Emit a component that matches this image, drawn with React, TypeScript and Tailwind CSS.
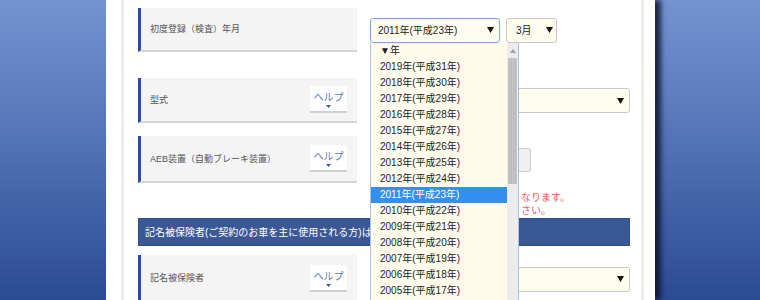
import React from 'react';

const font = "font-['Liberation_Sans','Noto_Sans_CJK_JP',sans-serif]";

const years = [
    '▼年',
    '2019年(平成31年)',
    '2018年(平成30年)',
    '2017年(平成29年)',
    '2016年(平成28年)',
    '2015年(平成27年)',
    '2014年(平成26年)',
    '2013年(平成25年)',
    '2012年(平成24年)',
    '2011年(平成23年)',
    '2010年(平成22年)',
    '2009年(平成21年)',
    '2008年(平成20年)',
    '2007年(平成19年)',
    '2006年(平成18年)',
    '2005年(平成17年)',
];

const Arrow = () => (
    <svg width="7" height="6" viewBox="0 0 7 6" className="shrink-0">
        <path d="M0 0 H7 L3.5 6 Z" fill="#111" />
    </svg>
);

const HelpButton = () => (
    <div className="w-[37px] h-[27px] bg-white border-b-2 border-[#cfcfcf] flex flex-col items-center pt-[6px]">
        <span className="text-[10px] leading-[12px] text-[#5a78b6]">ヘルプ</span>
        <svg width="5" height="3" viewBox="0 0 5 3" className="mt-[1px]">
            <path d="M0 0 H5 L2.5 3 Z" fill="#3a5a98" />
        </svg>
    </div>
);

const Label: React.FC<{ text: string; help?: boolean; h: string }> = ({ text, help, h }) => (
    <div className={`w-[219px] ${h} shrink-0 bg-[#f4f4f4] border-l-[3px] border-[#2c4d9c] border-b-2 border-b-[#d6d6d6] flex items-center justify-between pl-[9px] pr-[10px]`}>
        <span className="text-[9px] text-[#555] pt-[2px]">{text}</span>
        {help && <HelpButton />}
    </div>
);

const WideSelect = () => (
    <div className="w-[260px] h-[25px] bg-[#fffdee] border border-[#c8c8c8] rounded-[3px] flex items-center justify-end pr-[5px]">
        <Arrow />
    </div>
);

const App: React.FC = () => {
    return (
        <div className={`w-[760px] h-[300px] overflow-hidden flex bg-gradient-to-b from-[#7393d0] via-[#5171b5] to-[#2b4a94] ${font}`}>
            <div className="w-[106px] shrink-0" />

            {/* page */}
            <div className="w-[549px] shrink-0 bg-white pl-[15px] pr-[11px] shadow-[6px_0_5px_rgba(15,20,45,0.85)] relative">
                <div className="h-full border-x-[3px] border-[#ececec] pl-[14px] pr-[11px]">

                    {/* 初度登録 */}
                    <div className="flex gap-[13px] pt-[8px]">
                        <Label text="初度登録（検査）年月" h="h-[44px]" />
                        <div className="flex items-center gap-[6px]">
                            <div className="relative">
                                <div className="w-[130px] h-[25px] bg-[#fffdee] border border-[#80a6e4] rounded-[3px] flex items-center justify-between pl-[7px] pr-[5px]">
                                    <span className="text-[10px] text-[#222]">2011年(平成23年)</span>
                                    <Arrow />
                                </div>
                                {/* open list */}
                                <div className="absolute left-0 top-[25px] w-[149px] h-[260px] bg-[#fffcec] border-x border-[#a9c1ea] z-10 flex">
                                    <div className="flex-1 flex flex-col">
                                        {years.map((y) => (
                                            <div
                                                key={y}
                                                className={`h-[16px] shrink-0 flex items-center pl-[9px] text-[10px] ${y.startsWith('2011') ? 'bg-[#3190f0] text-white' : 'text-[#222]'}`}
                                            >
                                                {y}
                                            </div>
                                        ))}
                                    </div>
                                    <div className="w-[11px] bg-[#ececec] flex flex-col items-center">
                                        <svg width="6" height="4" viewBox="0 0 6 4" className="mt-[6px]">
                                            <path d="M0 4 H6 L3 0 Z" fill="#a0a0a0" />
                                        </svg>
                                        <div className="w-[9px] h-[126px] mt-[5px] bg-[repeating-linear-gradient(90deg,#c8c8c8_0px,#c8c8c8_1px,#b8b8b8_1px,#b8b8b8_2px)]" />
                                    </div>
                                </div>
                            </div>
                            <div className="w-[51px] h-[25px] bg-[#fffdee] border border-[#c8c8c8] rounded-[3px] flex items-center justify-between pl-[9px] pr-[3px]">
                                <span className="text-[10px] text-[#222]">3月</span>
                                <Arrow />
                            </div>
                        </div>
                    </div>

                    {/* 型式 */}
                    <div className="flex gap-[13px] mt-[26px]">
                        <Label text="型式" help h="h-[45px]" />
                        <div className="flex items-center">
                            <WideSelect />
                        </div>
                    </div>

                    {/* AEB */}
                    <div className="flex gap-[13px] mt-[13px]">
                        <Label text="AEB装置（自動ブレーキ装置）" help h="h-[47px]" />
                        <div className="flex flex-col">
                            <div className="h-[47px] flex items-center">
                                <div className="w-[161px] h-[24px] bg-[#efefef] border border-[#cccccc] rounded-[3px]" />
                            </div>
                            <div className="mt-[8px] pl-[151px] text-[10px] leading-[13px] text-[#f05a5a]">
                                <p>なります。</p>
                                <p>さい。</p>
                            </div>
                        </div>
                    </div>

                    {/* section header */}
                    <div className="mt-[1px] w-[492px] h-[28px] bg-[#3a5895] border border-[#2e4c8a] flex items-center pl-[6px]">
                        <span className="text-[10px] text-white whitespace-nowrap">記名被保険者(ご契約のお車を主に使用される方)は</span>
                    </div>

                    {/* 記名被保険者 */}
                    <div className="flex gap-[13px] mt-[9px]">
                        <Label text="記名被保険者" help h="h-[48px]" />
                        <div className="flex items-center">
                            <WideSelect />
                        </div>
                    </div>
                </div>
            </div>

            <div className="flex-1" />
        </div>
    );
};

export default App;
